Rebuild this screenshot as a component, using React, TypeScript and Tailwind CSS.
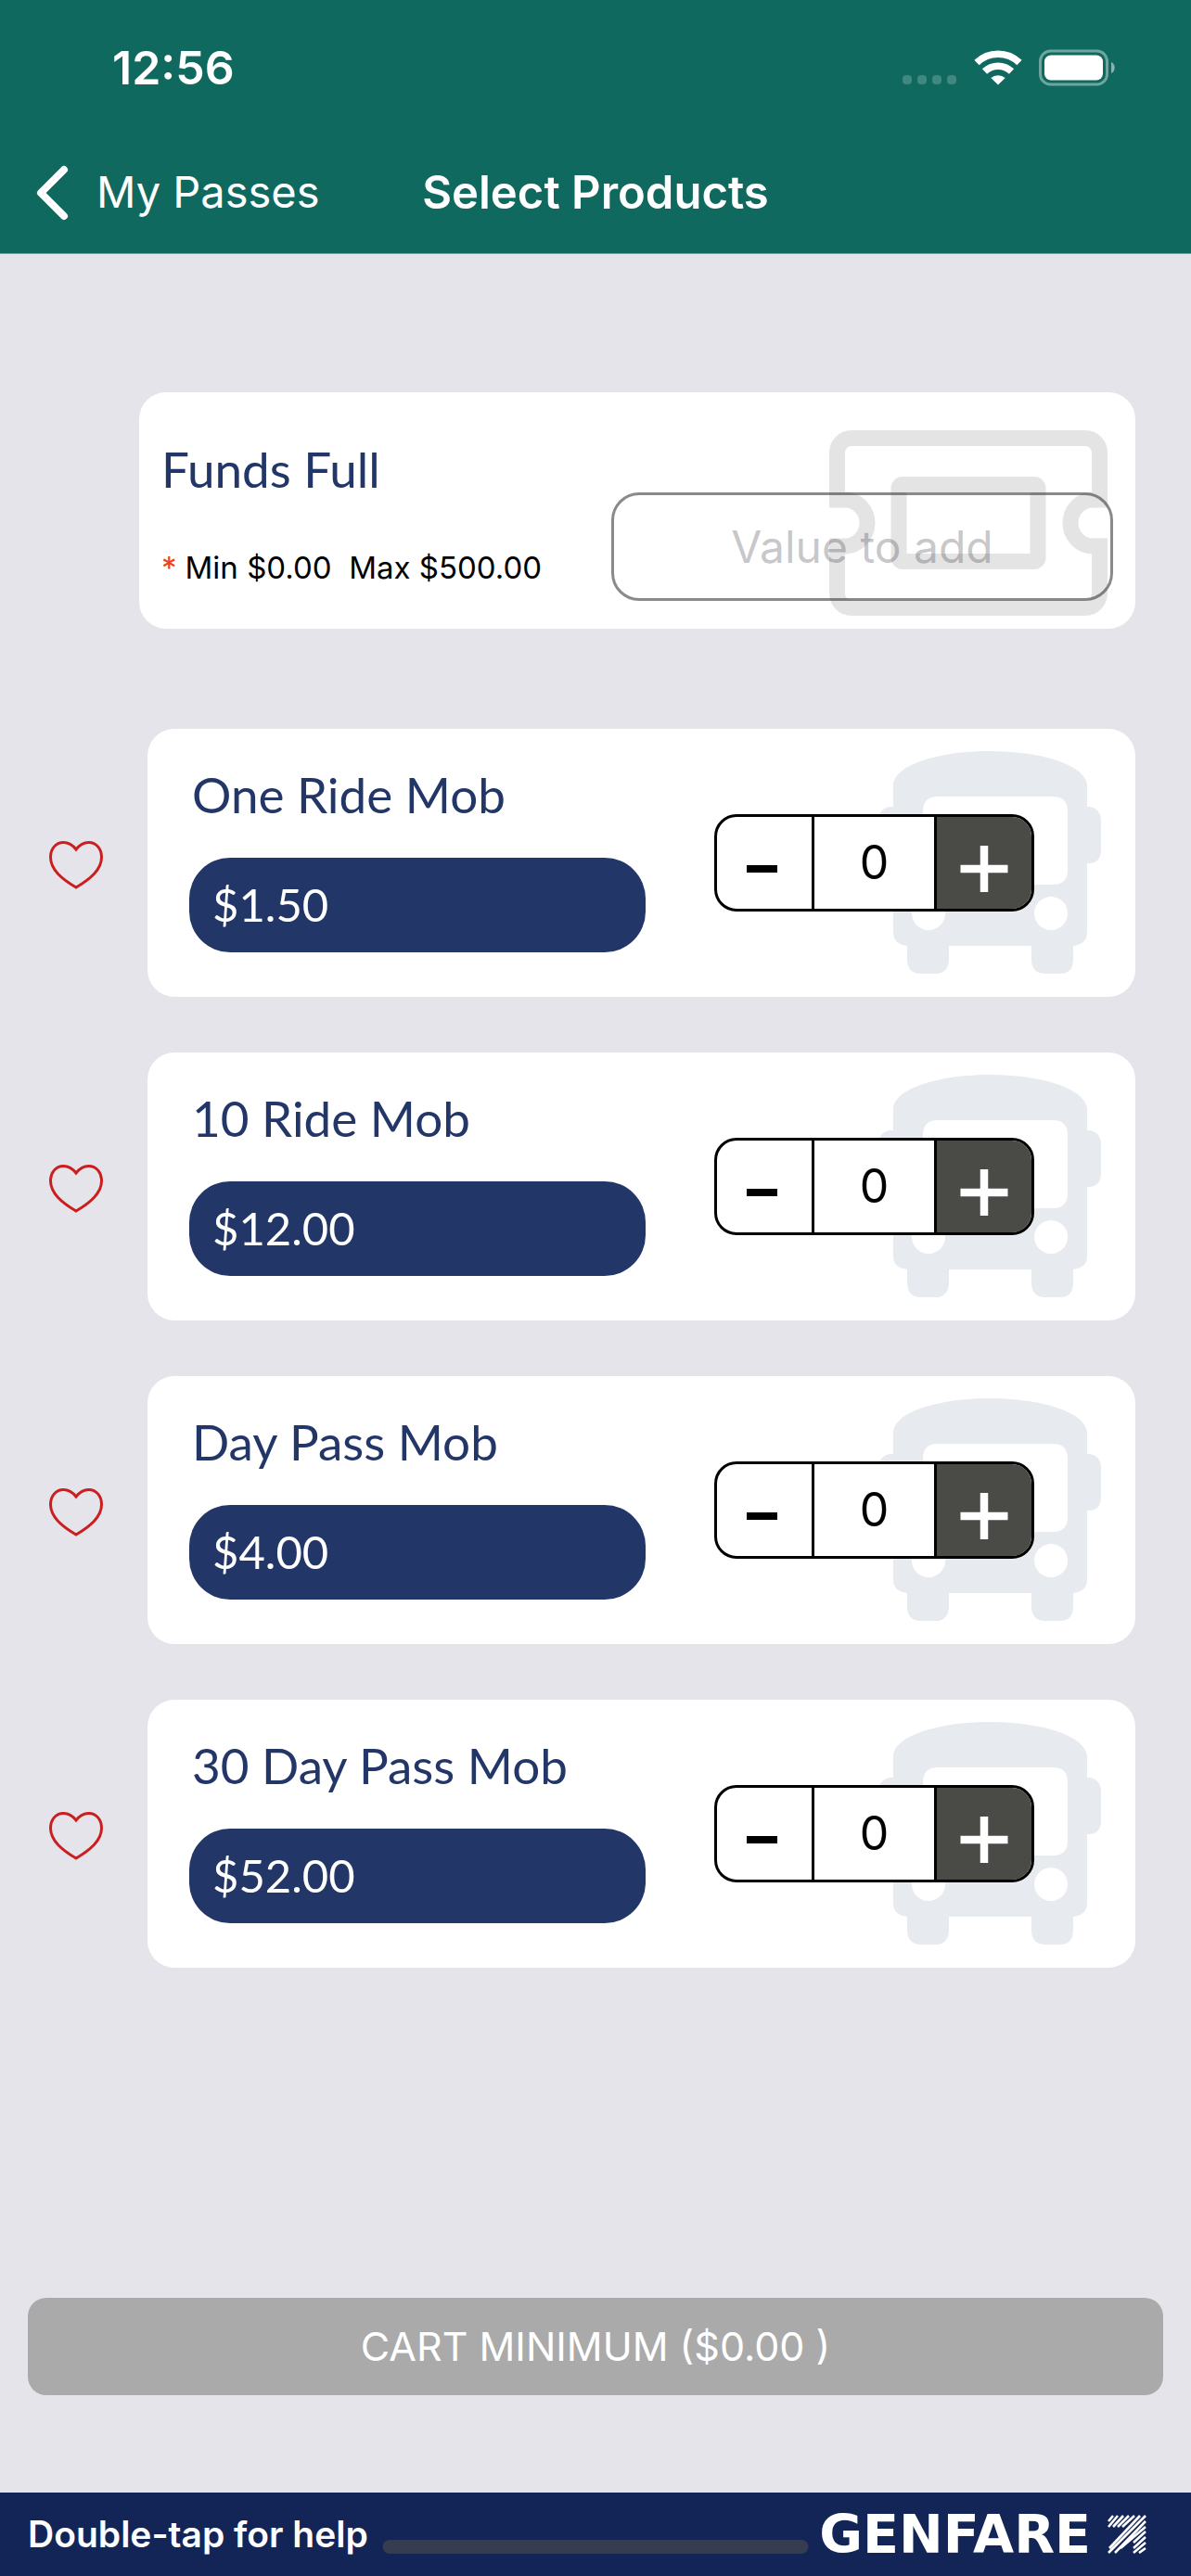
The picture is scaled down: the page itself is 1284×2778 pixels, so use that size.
import { useState } from "react";

const products = [
  { id: "one-ride", name: "One Ride Mob", price: "$1.50" },
  { id: "ten-ride", name: "10 Ride Mob", price: "$12.00" },
  { id: "day-pass", name: "Day Pass Mob", price: "$4.00" },
  { id: "thirty-day", name: "30 Day Pass Mob", price: "$52.00" },
];

function StatusIcons() {
  return (
    <div className="flex items-center gap-[18px]">
      <svg className="h-[40px] w-[59px]" viewBox="0 0 59 40" fill="#fff" fillOpacity="0.2">
        <rect x="0" y="28" width="10" height="10" rx="4" />
        <rect x="16" y="28" width="10" height="10" rx="4" />
        <rect x="32" y="28" width="10" height="10" rx="4" />
        <rect x="48" y="28" width="10" height="10" rx="4" />
      </svg>
      <svg className="h-[40px] w-[52px]" viewBox="0 0 52 40" fill="none">
        <path d="M3 14.5a33 33 0 0 1 46 0" stroke="#fff" strokeWidth="7.5" />
        <path d="M11.5 24a21 21 0 0 1 29 0" stroke="#fff" strokeWidth="7.5" />
        <path d="M18.3 31a12 12 0 0 1 15.4 0L26 38.5z" fill="#fff" />
      </svg>
      <svg className="h-[40px] w-[83px]" viewBox="0 0 83 40" fill="none">
        <rect x="1.5" y="2" width="72" height="36" rx="11" stroke="#fff" strokeOpacity="0.4" strokeWidth="3" />
        <rect x="6" y="6.5" width="63" height="27" rx="7" fill="#fff" />
        <path d="M78 14c5 2 5 10 0 12z" fill="#fff" fillOpacity="0.5" />
      </svg>
    </div>
  );
}

function TicketIcon() {
  return (
    <svg
      className="pointer-events-none absolute right-[30px] top-[41px] h-[200px] w-[300px]"
      viewBox="0 0 300 200"
      fill="none"
      stroke="#e4e4e4"
      strokeWidth="17"
    >
      <path d="M8.5 75V24A15.5 15.5 0 0 1 24 8.5H276A15.5 15.5 0 0 1 291.5 24V75H284A24 25 0 0 0 284 125H291.5V176A15.5 15.5 0 0 1 276 191.5H24A15.5 15.5 0 0 1 8.5 176V125H17A24 25 0 0 0 17 75H0" />
      <rect x="75" y="58.5" width="150" height="83" rx="4" />
    </svg>
  );
}

function BusIcon() {
  return (
    <svg
      className="pointer-events-none absolute right-[37px] top-[24px] size-[240px]"
      viewBox="0 0 240 240"
      fill="#e7eaef"
    >
      <path
        fillRule="evenodd"
        d="M16 36C18 14 66 0 120 0S222 14 225 36V60H228Q240 62 240 76V106Q240 120 228 121H225V196Q225 208 210 210V224Q210 240 196 240H180Q165 240 165 224V210H76V224Q76 240 61 240H46Q31 240 31 224V210Q16 208 16 196V121H12Q0 120 0 106V76Q0 62 12 60H16ZM64 49Q48 49 48 65V128Q48 144 64 144H188Q204 144 204 128V65Q204 49 188 49ZM54 157a18 18 0 1 0 .1 0ZM186 157a18 18 0 1 0 .1 0Z"
      />
    </svg>
  );
}

function Stepper({ name }: { name: string }) {
  const [count, setCount] = useState(0);

  return (
    <div className="relative mr-[109px] flex h-[105px] w-[345px] overflow-hidden rounded-[24px] border-3 border-black bg-white">
      <button
        type="button"
        aria-label={`Remove ${name}`}
        onClick={() => setCount(Math.max(0, count - 1))}
        className="flex w-[102px] items-center justify-center"
      >
        <svg className="mt-3 h-[50px] w-[52px]" viewBox="0 0 52 50">
          <path d="M7 25h33" stroke="#000" strokeWidth="8" />
        </svg>
      </button>
      <output className="flex flex-1 items-center justify-center border-x-3 border-black text-[50px] text-black">
        {count}
      </output>
      <button
        type="button"
        aria-label={`Add ${name}`}
        onClick={() => setCount(count + 1)}
        className="flex w-[102px] items-center justify-center bg-[#4a4a47]"
      >
        <svg className="mt-3 h-[50px] w-[52px]" viewBox="0 0 52 50">
          <path d="M0.5 25h51M26 0v50" stroke="#fff" strokeWidth="8.5" />
        </svg>
      </button>
    </div>
  );
}

function ProductRow({ name, price }: { name: string; price: string }) {
  return (
    <li className="flex items-center">
      <button
        type="button"
        aria-label={`Favorite ${name}`}
        className="flex w-[159px] shrink-0 pl-[52px] pt-1"
      >
        <svg className="h-[52px] w-[60px]" viewBox="0 0 60 52" fill="none">
          <path
            d="M30 9C26 4 21 1.5 16.5 1.5C8 1.5 2.5 8.5 2.5 17.5C2.5 31 15 41 30 50C45 41 57.5 31 57.5 17.5C57.5 8.5 52 1.5 43.5 1.5C39 1.5 34 4 30 9Z"
            stroke="#cb1f1f"
            strokeWidth="3"
          />
        </svg>
      </button>
      <div className="relative flex h-[289px] flex-1 items-center justify-between rounded-[29px] bg-white pl-[45px]">
        <BusIcon />
        <div className="mb-2 w-[492px]">
          <h2 className="pl-[3px] font-[Lato,sans-serif] text-[53px] leading-[60px] text-[#233668]">{name}</h2>
          <p className="mt-[38px] flex h-[102px] items-center rounded-[44px] bg-[#233668] pl-[25px] font-[Lato,sans-serif] text-[49px] text-white">
            {price}
          </p>
        </div>
        <Stepper name={name} />
      </div>
    </li>
  );
}

export default function App() {
  const [amount, setAmount] = useState("");

  return (
    <div className="flex min-h-screen flex-col bg-[#e5e4ea] font-[Inter,sans-serif]">
      <header className="border-b border-[#8f9b9f] bg-[#10695f] text-white">
        <div className="flex h-[146px] items-center justify-between pl-[121px] pr-[81px]">
          <span className="text-[50px] font-semibold">12:56</span>
          <StatusIcons />
        </div>
        <nav className="grid h-[127px] grid-cols-[1fr_auto_1fr] items-center pb-1">
          <a href="#passes" className="flex items-center gap-[30px] pl-[38px] text-[47px]">
            <svg className="h-[60px] w-[36px]" viewBox="0 0 36 60" fill="none">
              <path d="M31 5L6 30L31 55" stroke="#fff" strokeWidth="8" strokeLinecap="round" strokeLinejoin="round" />
            </svg>
            My Passes
          </a>
          <h1 className="text-[49px] font-semibold">Select Products</h1>
        </nav>
      </header>

      <main className="flex flex-1 flex-col">
        <section className="relative ml-[150px] mr-[60px] mt-[149px] flex h-[255px] items-end justify-between rounded-[29px] bg-white px-6 pb-[30px]">
          <TicketIcon />
          <div>
            <h2 className="font-[Lato,sans-serif] text-[53px] leading-[60px] text-[#233668]">Funds Full</h2>
            <label htmlFor="amount" className="mt-[52px] flex h-[60px] gap-[9px] whitespace-pre text-[33px] text-black">
              <span className="text-[#f4401c]">*</span>
              Min $0.00  Max $500.00
            </label>
          </div>
          <input
            id="amount"
            inputMode="decimal"
            value={amount}
            onChange={(e) => setAmount(e.target.value)}
            placeholder="Value to add"
            className="relative h-[117px] w-[541px] rounded-[30px] border-3 border-[#3c3c43]/60 text-center text-[48px] text-black placeholder:text-[#3c3c43]/30"
          />
        </section>

        <ul className="mr-[60px] mt-[108px] flex flex-col gap-[60px]">
          {products.map((p) => (
            <ProductRow key={p.id} name={p.name} price={p.price} />
          ))}
        </ul>

        <button
          type="button"
          className="mx-[30px] mb-[105px] mt-auto h-[105px] rounded-[20px] bg-[#aaaaaa] text-[43px] text-white"
        >
          CART MINIMUM ($0.00 )
        </button>
      </main>

      <footer className="relative flex h-[90px] items-center justify-between bg-[#132557] pl-[30px] pr-12 text-white">
        <span className="text-[39px] font-semibold">Double-tap for help</span>
        <span className="absolute bottom-6 left-1/2 h-[15px] w-[459px] -translate-x-1/2 rounded-full bg-[#363d50]" />
        <span className="flex items-center gap-[18px] font-['DejaVu_Sans',sans-serif] text-[57px] font-bold leading-none">
          GENFARE
          <svg className="size-[42px]" viewBox="0 0 42 42" stroke="#fff" strokeWidth="2.6">
            <path d="M1 7L6 1M1 13L11 1M6 13L17 1M11 13L23 1M16 13L29 1M2 36L35 1M1 41L41 1M8 41L41 7M14 36L41 13M28 30L41 18M28 36L41 24M28 41L41 30M34 41L41 36" />
          </svg>
        </span>
      </footer>
    </div>
  );
}
